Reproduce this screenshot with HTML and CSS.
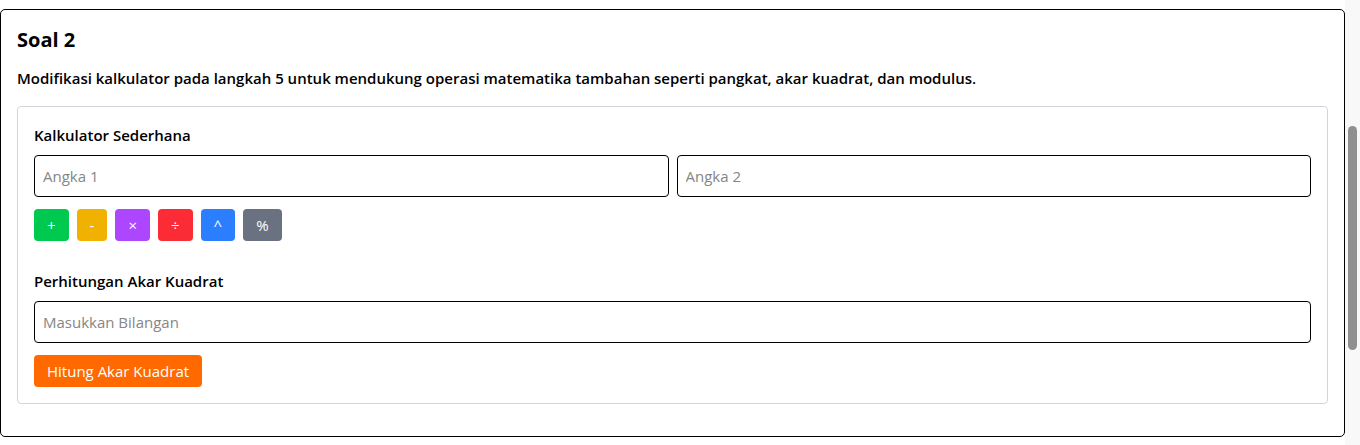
FILE: index.html
```html
<!DOCTYPE html>
<html lang="id">
<head>
<meta charset="utf-8">
<title>Soal 2</title>
<link rel="stylesheet" href="styles.css">
</head>
<body>
<div class="viewport">
  <main class="page">
    <section class="card">
      <h2 class="title">Soal 2</h2>
      <p class="desc">Modifikasi kalkulator pada langkah 5 untuk mendukung operasi matematika tambahan seperti pangkat, akar kuadrat, dan modulus.</p>
      <div class="panel">
        <div class="group">
          <h3 class="label">Kalkulator Sederhana</h3>
          <div class="inputs">
            <input class="field" type="text" placeholder="Angka 1">
            <input class="field" type="text" placeholder="Angka 2">
          </div>
          <div class="ops">
            <button class="btn green">+</button>
            <button class="btn yellow">-</button>
            <button class="btn purple">×</button>
            <button class="btn red">÷</button>
            <button class="btn blue">^</button>
            <button class="btn gray">%</button>
          </div>
        </div>
        <div class="group second">
          <h3 class="label">Perhitungan Akar Kuadrat</h3>
          <div class="inputs">
            <input class="field" type="text" placeholder="Masukkan Bilangan">
          </div>
          <div class="ops">
            <button class="btn orange">Hitung Akar Kuadrat</button>
          </div>
        </div>
      </div>
    </section>
  </main>
  <div class="scrolltrack" aria-hidden="true"><div class="thumb"></div></div>
</div>
</body>
</html>
```

FILE: styles.css
```css
* { box-sizing: border-box; }
html, body { margin: 0; padding: 0; background: #fff; }
body {
  font-family: "Open Sans", "Noto Sans", "Liberation Sans", sans-serif;
  color: #000;
  overflow: hidden;
}
.viewport {
  display: flex;
  height: 445px;
}
.page {
  flex: 1;
  padding-top: 9px;
}
.card {
  border: 1px solid #000;
  border-radius: 5px;
  padding: 16px;
  height: 428px;
}
.title {
  margin: 0;
  font-size: 20px;
  line-height: 28px;
  font-weight: 700;
}
.desc {
  margin: 12px 0 16px;
  font-size: 15px;
  line-height: 24px;
  font-weight: 600;
}
.panel {
  border: 1px solid #d1d5dc;
  border-radius: 4px;
  padding: 16px;
}
.group.second { margin-top: 28px; }
.label {
  margin: 0 0 8px;
  font-size: 15px;
  line-height: 24px;
  font-weight: 600;
}
.inputs {
  display: flex;
  gap: 8px;
}
.field {
  flex: 1;
  min-width: 0;
  height: 42px;
  border: 1px solid #000;
  border-radius: 4px;
  padding: 0 8px;
  font-family: inherit;
  font-size: 15px;
  color: #000;
  background: #fff;
}
.field::placeholder { color: #868686; }
.ops {
  display: flex;
  gap: 8px;
  margin-top: 12px;
}
.btn {
  height: 32px;
  padding: 0 13px;
  border: 0;
  border-radius: 4px;
  font-family: inherit;
  font-size: 15px;
  color: #fff;
  line-height: 32px;
}
.green { background: #00c950; }
.yellow { background: #f0b100; }
.purple { background: #ad46ff; }
.red { background: #fb2c36; }
.blue { background: #2b7fff; }
.gray { background: #6a7282; }
.orange { background: #ff6900; }
.scrolltrack {
  width: 15px;
  background: #f8f8f8;
  padding: 126px 3px 0 3px;
}
.thumb {
  width: 9px;
  height: 224px;
  border-radius: 5px;
  background: #8f8f8f;
}
```
